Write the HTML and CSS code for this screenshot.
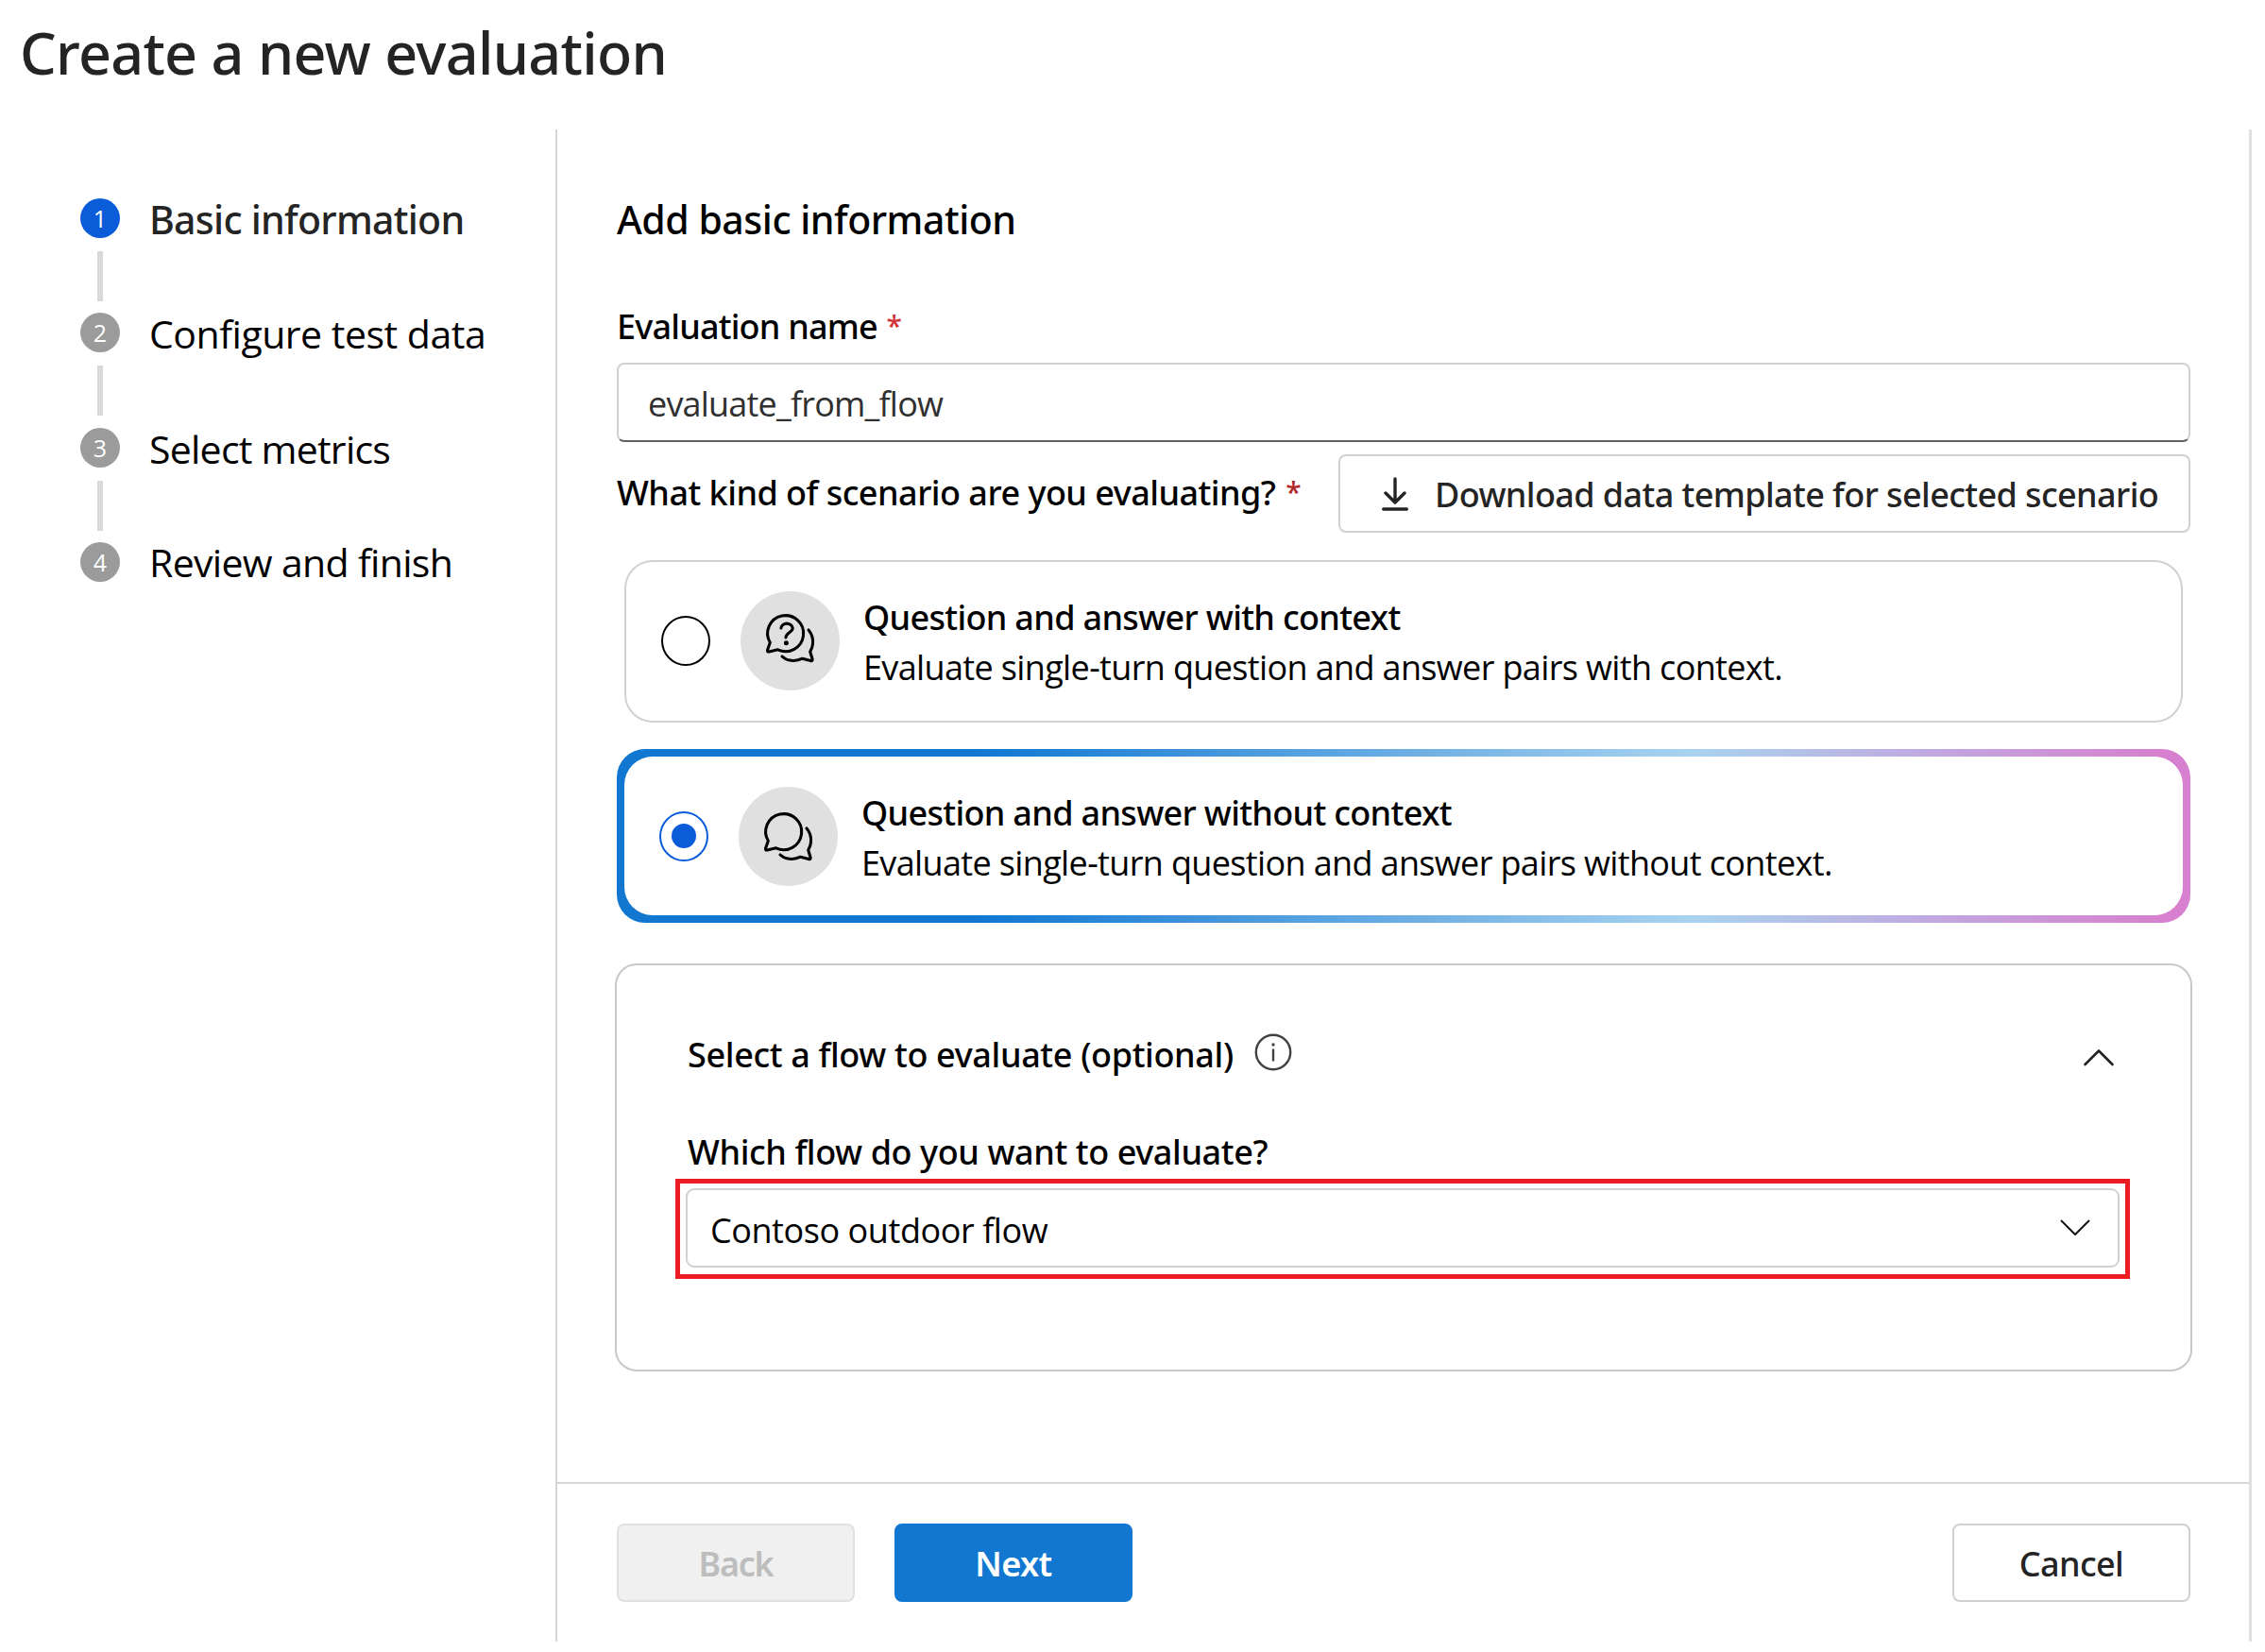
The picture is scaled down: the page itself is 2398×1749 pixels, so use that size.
FILE: index.html
```html
<!DOCTYPE html>
<html lang="en">
<head>
    <meta charset="UTF-8">
    <meta name="viewport" content="width=device-width, initial-scale=1.0">
    <title>Create a new evaluation</title>

    <link rel="stylesheet" href="styles.css">
</head>

<body>
    <h1 class="page-title">Create a new evaluation</h1>

    <div class="wizard">
        <!-- Step list -->
        <ol class="steps">
            <li class="step active">
                <div class="marker"><span class="number">1</span><span class="connector"></span></div>
                <span class="step-label">Basic information</span>
            </li>
            <li class="step">
                <div class="marker"><span class="number">2</span><span class="connector"></span></div>
                <span class="step-label">Configure test data</span>
            </li>
            <li class="step">
                <div class="marker"><span class="number">3</span><span class="connector"></span></div>
                <span class="step-label metrics">Select metrics</span>
            </li>
            <li class="step">
                <div class="marker"><span class="number">4</span></div>
                <span class="step-label review">Review and finish</span>
            </li>
        </ol>

        <div class="panel">
            <form class="form" id="evaluationForm">
                <h2>Add basic information</h2>

                <!-- Evaluation name -->
                <label class="field-label name-label" for="evaluationName">Evaluation name <span class="required">*</span></label>
                <input class="text-input" type="text" id="evaluationName" value="evaluate_from_flow">

                <!-- Scenario selection -->
                <div class="scenario-header">
                    <span class="field-label scenario-label">What kind of scenario are you evaluating? <span class="required dark">*</span></span>
                    <button type="button" class="button download">
                        <svg width="28" height="36" viewBox="0 0 28 36" fill="none" stroke="#242424" stroke-width="3.4" stroke-linecap="round" stroke-linejoin="round">
                            <path d="M14 2v24M4 17l10 10 10-10M1.7 34h24.6"/>
                        </svg>
                        <span>Download data template for selected scenario</span>
                    </button>
                </div>

                <div class="card">
                    <span class="radio"></span>
                    <span class="avatar">
                        <svg width="105" height="105" viewBox="0 0 105 105" fill="none" stroke="#000" stroke-width="3.1" stroke-linecap="round" stroke-linejoin="round">
                            <path d="M39.5 61.8L30.3 64Q28 64.4 28.6 62L31.3 54.3A19 19 0 1 1 39.5 61.8Z"/>
                            <path d="M72 41C75.5 45 77 50 76.5 55.5C76.3 58.5 75.5 61 73.7 64L76 71.5Q76.6 74 74.3 73.6L65.5 71.2C58 75 49 73.8 44 69"/>
                            <path d="M42.9 39A6.2 5.6 0 0 1 55.2 39C55.2 43.5 48.2 43.5 48 49"/>
                            <circle cx="48.4" cy="54.7" r="2.5" fill="#000" stroke="none"/>
                        </svg>
                    </span>
                    <div class="card-text">
                        <div class="card-title">Question and answer with context</div>
                        <div class="card-desc">Evaluate single-turn question and answer pairs with context.</div>
                    </div>
                </div>

                <div class="card-border">
                    <div class="card selected">
                        <span class="radio checked"></span>
                        <span class="avatar">
                            <svg width="105" height="105" viewBox="0 -3 105 105" fill="none" stroke="#000" stroke-width="3.1" stroke-linecap="round" stroke-linejoin="round">
                                <path d="M39.5 61.8L30.3 64Q28 64.4 28.6 62L31.3 54.3A19 19 0 1 1 39.5 61.8Z"/>
                                <path d="M72 41C75.5 45 77 50 76.5 55.5C76.3 58.5 75.5 61 73.7 64L76 71.5Q76.6 74 74.3 73.6L65.5 71.2C58 75 49 73.8 44 69"/>
                            </svg>
                        </span>
                        <div class="card-text">
                            <div class="card-title">Question and answer without context</div>
                            <div class="card-desc">Evaluate single-turn question and answer pairs without context.</div>
                        </div>
                    </div>
                </div>

                <!-- Flow selection -->
                <div class="flow">
                    <div class="flow-header">
                        <span class="flow-title">Select a flow to evaluate (optional)</span>
                        <svg class="info" width="40" height="40" viewBox="0 0 40 40" fill="none" stroke="#424242" stroke-width="2.4">
                            <circle cx="20" cy="20" r="18.2"/>
                            <path d="M20 16.5v13"/>
                            <circle cx="20" cy="12" r="1.7" fill="#424242" stroke="none"/>
                        </svg>
                        <svg class="chevron-up" width="32" height="18" viewBox="0 0 32 18" fill="none" stroke="#242424" stroke-width="2.6" stroke-linecap="round" stroke-linejoin="round">
                            <path d="M1.5 16L16 1.5 30.5 16"/>
                        </svg>
                    </div>
                    <div class="flow-label">Which flow do you want to evaluate?</div>
                    <div class="highlight">
                        <div class="select">
                            <span>Contoso outdoor flow</span>
                            <svg width="32" height="18" viewBox="0 0 32 18" fill="none" stroke="#111" stroke-width="1.9" stroke-linecap="round" stroke-linejoin="round">
                                <path d="M1.5 1.5L16 16 30.5 1.5"/>
                            </svg>
                        </div>
                    </div>
                </div>
            </form>

            <!-- Wizard buttons -->
            <div class="footer">
                <button type="button" class="button back" disabled>Back</button>
                <button type="button" class="button next">Next</button>
                <button type="button" class="button cancel">Cancel</button>
            </div>
        </div>
    </div>
</body>

</html>
```
FILE: styles.css
```css
* {
    box-sizing: border-box;
}

body {
    margin: 0;
    height: 1749px;
    background-color: #fff;
    color: #000;
    font-family: "Noto Sans", "Open Sans", sans-serif;
    font-size: 36px;
    font-weight: 500;
    line-height: 48px;
    white-space: nowrap;
    overflow: hidden;
}

.page-title {
    margin: 0;
    height: 137px;
    padding-left: 21px;
    font-size: 61px;
    font-weight: 500;
    line-height: 112px;
    letter-spacing: -0.7px;
    color: #242424;
}

.wizard {
    display: flex;
    height: 1601px;
    padding-right: 14px;
}

/* Step list */
.steps {
    width: 588px;
    margin: 0;
    padding: 73px 0 0 85px;
    list-style: none;
}

.step {
    display: flex;
    gap: 31px;
    height: 121.3px;
}

.marker {
    display: flex;
    flex-direction: column;
    align-items: center;
    width: 42px;
}

.number {
    width: 42px;
    height: 42px;
    border-radius: 50%;
    background-color: #9b9b9b;
    color: #fff;
    font-family: "Open Sans", sans-serif;
    font-size: 25px;
    font-weight: 400;
    line-height: 42px;
    text-align: center;
}

.connector {
    width: 6px;
    height: 53px;
    margin-top: 14px;
    background-color: #d9d9d9;
}

.step-label {
    font-family: "Open Sans", sans-serif;
    font-size: 41px;
    font-weight: 400;
    line-height: 45px;
    letter-spacing: -0.48px;
}

.step-label.metrics {
    line-height: 44px;
    letter-spacing: -0.75px;
}

.step-label.review {
    line-height: 42px;
    letter-spacing: -0.67px;
}

.active .number {
    background-color: #0b5cd8;
}

.active .step-label {
    font-family: "Noto Sans", sans-serif;
    font-weight: 500;
    letter-spacing: -0.72px;
    color: #242424;
}

/* Right side panel */
.panel {
    flex: 1;
    display: flex;
    flex-direction: column;
    border-left: 2px solid #d6d6d6;
    border-right: 3px solid #e0e0e0;
}

.form {
    flex: 1;
    padding: 67px 62px 0 63px;
}

h2 {
    margin: 0 0 62px;
    font-size: 41px;
    font-weight: 500;
    line-height: 56px;
    letter-spacing: -0.48px;
}

.field-label {
    display: block;
}

.name-label {
    letter-spacing: -0.8px;
}

.scenario-label {
    padding-bottom: 1px;
    letter-spacing: -0.52px;
}

.required {
    margin-left: 1px;
    color: #d13438;
    font-size: 30px;
    line-height: 30px;
    vertical-align: 3px;
}

.required.dark {
    margin-left: 2px;
    color: #b3282d;
}

.text-input {
    display: block;
    width: 100%;
    height: 84px;
    margin-top: 14px;
    padding: 2px 31px 0;
    border: 2px solid #d1d1d1;
    border-bottom-color: #616161;
    border-radius: 8px;
    background-color: #fff;
    color: #303030;
    font-family: "Open Sans", sans-serif;
    font-size: 36px;
    letter-spacing: -0.8px;
}

/* Buttons */
.button {
    display: flex;
    align-items: center;
    justify-content: center;
    width: 252px;
    height: 83px;
    padding: 2px 0 0;
    border: 2px solid #d1d1d1;
    border-radius: 8px;
    background-color: #fff;
    color: #242424;
    font-family: inherit;
    font-size: 36px;
    font-weight: 500;
    letter-spacing: -0.6px;
}

.scenario-header {
    display: flex;
    align-items: center;
    justify-content: space-between;
    margin-top: 13px;
}

.download {
    justify-content: flex-start;
    gap: 28px;
    width: 902px;
    padding-left: 44px;
    letter-spacing: -0.6px;
}

.download svg {
    margin-bottom: 2px;
}

/* Scenario cards */
.card {
    display: flex;
    align-items: center;
    height: 172px;
    margin: 29px 8px 0;
    padding: 0 0 1px 37px;
    border: 2px solid #d1d1d1;
    border-radius: 30px;
    background-color: #fff;
}

.card-border {
    margin-top: 28px;
    padding: 8px;
    border-radius: 30px;
    background: linear-gradient(to right, #1177d1 23%, #a9d3f0 68.5%, #d780cf 98%);
}

.card.selected {
    height: 168px;
    margin: 0;
    padding-bottom: 0;
    border: none;
}

.radio {
    display: flex;
    align-items: center;
    justify-content: center;
    width: 52px;
    height: 53px;
    border: 2px solid #000;
    border-radius: 50%;
}

.radio.checked {
    border-color: #0b5cd8;
}

.radio.checked::after {
    content: "";
    width: 26px;
    height: 26px;
    border-radius: 50%;
    background-color: #0b5cd8;
}

.avatar {
    width: 105px;
    height: 105px;
    margin: 0 25px 0 32px;
    border-radius: 50%;
    background-color: #e0e0e0;
}

.avatar svg {
    display: block;
}

.card-text {
    padding-top: 3px;
    line-height: 53px;
}

.card-title {
    letter-spacing: -0.67px;
}

.card-desc {
    font-family: "Open Sans", sans-serif;
    font-weight: 400;
    letter-spacing: -0.64px;
}

/* Flow section */
.flow {
    height: 432px;
    margin: 43px -2px 0;
    padding: 71px 64px 0 75px;
    border: 2px solid #c8c8c8;
    border-radius: 23px;
}

.flow-header {
    display: flex;
    align-items: center;
    padding-right: 17px;
    letter-spacing: -0.35px;
}

.info {
    margin: 0 auto 7px 22px;
}

.chevron-up {
    margin-top: 5px;
}

.flow-label {
    margin-top: 55px;
    letter-spacing: -0.4px;
}

.highlight {
    height: 106px;
    margin: 4px 0 0 -13px;
    padding: 5px 6px;
    border: 5px solid #ed1c24;
}

.select {
    display: flex;
    align-items: center;
    justify-content: space-between;
    height: 84px;
    padding: 0 29px 0 24px;
    border: 2px solid #d1d1d1;
    border-radius: 9px;
    font-family: "Open Sans", sans-serif;
    font-weight: 400;
    letter-spacing: -0.43px;
}

.select span {
    padding-top: 5px;
}

/* Footer */
.footer {
    display: flex;
    gap: 42px;
    height: 169px;
    padding: 42px 62px 0 63px;
    border-top: 2px solid #d6d6d6;
}

.back {
    border-color: #e0e0e0;
    background-color: #f0f0f0;
    color: #bdbdbd;
    font-weight: 600;
    letter-spacing: -1.3px;
}

.next {
    border-color: #1177d1;
    background-color: #1177d1;
    color: #fff;
    font-weight: 600;
}

.cancel {
    margin-left: auto;
}
```
